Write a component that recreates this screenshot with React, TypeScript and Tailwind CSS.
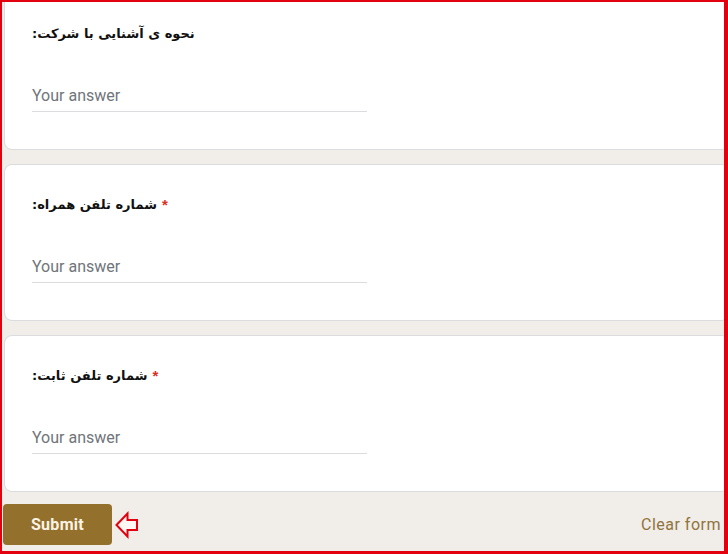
import React from 'react';

interface QuestionProps {
    title: string;
    required?: boolean;
}

const Question: React.FC<QuestionProps> = ({ title, required }) => {
    return (
        <div className="h-[157px] ml-[2px] mr-[-6px] shrink-0 rounded-lg border border-[#dadce0] bg-white pl-[27px] pt-[28px]">
            <div className="h-6 flex items-center text-[13px] font-bold text-[#111] [font-family:'DejaVu_Sans',sans-serif]">
                <span dir="rtl">{title}</span>
                {required && <span className="ml-[5px] text-[#d93025] [font-family:'Liberation_Sans',sans-serif] text-[15px]">*</span>}
            </div>
            <div className="mt-[34px] w-[335px] h-[32px] flex items-center border-b border-[#dadce0]">
                <span className="text-[16px] text-[#70757a] [font-family:Roboto,sans-serif]">Your answer</span>
            </div>
        </div>
    );
};

const App: React.FC = () => {
    return (
        <div className="w-[728px] h-[554px] overflow-hidden border-t-2 border-l-2 border-r-4 border-b-[3px] border-[#e3000f] bg-[#f1ede8]">
            <div className="mt-[-9px] flex flex-col gap-[14px]">
                <Question title="نحوه ی آشنایی با شرکت:" />
                <Question title="شماره تلفن همراه:" required />
                <Question title="شماره تلفن ثابت:" required />

                <div className="flex items-center justify-between pl-[1px] pr-[3px] -mt-[2px]">
                    <div className="flex items-center gap-[3px]">
                        <button className="w-[109px] h-[41px] rounded-[4px] bg-[#93702b] text-[16px] font-bold text-[#fbf3e4] [font-family:Roboto,sans-serif] tracking-[0.3px]">
                            Submit
                        </button>
                        <svg width="24" height="28" viewBox="0 0 24 28">
                            <polygon
                                points="1.5,14 12.5,2.5 12.5,9 22,9 22,19 12.5,19 12.5,25.5"
                                fill="#fdf7f4"
                                stroke="#e3000f"
                                strokeWidth="2"
                                strokeLinejoin="miter"
                            />
                        </svg>
                    </div>
                    <span className="text-[16px] font-normal text-[#8f7440] [font-family:Roboto,sans-serif] tracking-[0.5px]">Clear form</span>
                </div>
            </div>
        </div>
    );
};

export default App;
